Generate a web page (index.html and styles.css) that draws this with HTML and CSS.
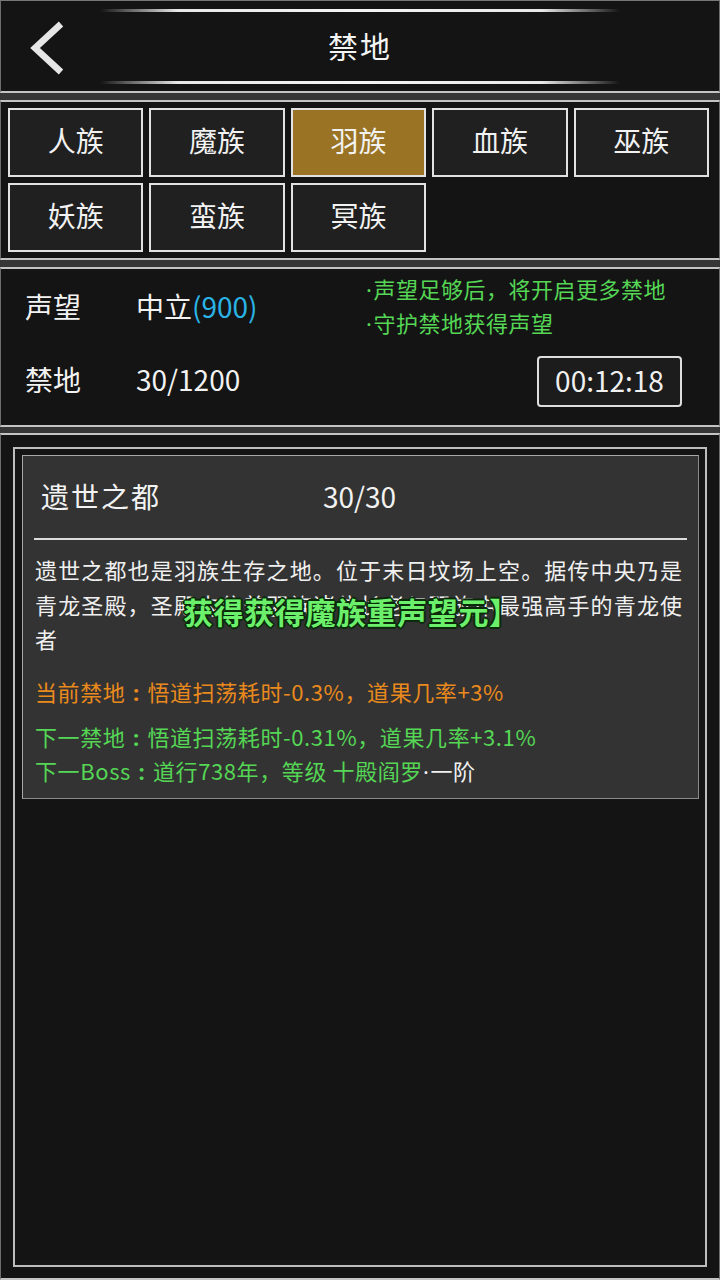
FILE: index.html
```html
<!DOCTYPE html>
<html lang="zh-CN">
<head>
<meta charset="utf-8">
<title>禁地</title>
<link rel="stylesheet" href="styles.css">
</head>
<body>
<div class="app">
  <header class="panel header">
    <div class="deco-line"></div>
    <div class="title-row">
      <svg class="back" width="40" height="56" viewBox="0 0 40 56" aria-hidden="true">
        <polyline points="32,4 6,28 32,52" fill="none" stroke="#e6e6e6" stroke-width="6.5" stroke-linecap="butt" stroke-linejoin="miter"/>
      </svg>
      <h1 class="title">禁地</h1>
      <span class="spacer"></span>
    </div>
    <div class="deco-line"></div>
  </header>

  <section class="panel tabs">
    <div class="tab">人族</div>
    <div class="tab">魔族</div>
    <div class="tab active">羽族</div>
    <div class="tab">血族</div>
    <div class="tab">巫族</div>
    <div class="tab">妖族</div>
    <div class="tab">蛮族</div>
    <div class="tab">冥族</div>
  </section>

  <section class="panel status">
    <div class="status-row row-top">
      <span class="label">声望</span>
      <span class="value">中立<span class="blue">(900)</span></span>
      <div class="tips">
        <div><span class="dot">·</span>声望足够后，将开启更多禁地</div>
        <div><span class="dot">·</span>守护禁地获得声望</div>
      </div>
    </div>
    <div class="status-row row-bottom">
      <span class="label">禁地</span>
      <span class="value">30/1200</span>
      <div class="timer">00:12:18</div>
    </div>
  </section>

  <main class="panel content">
    <div class="frame">
      <article class="card">
        <div class="card-head">
          <span class="card-name">遗世之都</span>
          <span class="card-count">30/30</span>
        </div>
        <p class="desc">遗世之都也是羽族生存之地。位于末日坟场上空。据传中央乃是青龙圣殿，圣殿内住着羽族诸位长老与羽族中最强高手的青龙使者</p>
        <p class="line orange">当前禁地<span class="colon">:</span>悟道扫荡耗时-0.3%，道果几率+3%</p>
        <p class="line green">下一禁地<span class="colon">:</span>悟道扫荡耗时-0.31%，道果几率+3.1%</p>
        <p class="line green">下一Boss<span class="colon">:</span>道行738年，等级 十殿阎罗<span class="white"><span class="dot">·</span>一阶</span></p>
        <div class="toast">获得获得魔族重声望元】</div>
      </article>
    </div>
  </main>
</div>
</body>
</html>
```

FILE: styles.css
```css
* { box-sizing: border-box; }
html, body {
  margin: 0;
  padding: 0;
  height: 1280px;
  background: #363636;
  font-family: "Noto Sans CJK SC", "Noto Sans", sans-serif;
  color: #f0f0f0;
}
.app {
  width: 720px;
  height: 1280px;
  display: flex;
  flex-direction: column;
}
.panel {
  background: #141414;
  border-left: 1px solid #6e6e6e;
  border-right: 1px solid #6e6e6e;
  border-top: 2px solid #c4c4c4;
  border-bottom: 2px solid #c4c4c4;
}
.dot {
  font-family: "Noto Sans", sans-serif;
  margin-right: 1px;
}
.colon {
  display: inline-block;
  width: 22px;
  text-align: center;
  font-family: "Noto Sans", sans-serif;
  font-weight: bold;
}

/* header */
.header {
  height: 93px;
  border-top: 1px solid #777;
  padding-top: 8px;
  display: flex;
  flex-direction: column;
}
.deco-line {
  width: 520px;
  height: 3px;
  margin: 0 auto;
  background: linear-gradient(90deg, rgba(255,255,255,0) 0%, #e8e8e8 15%, #f4f4f4 50%, #e8e8e8 85%, rgba(255,255,255,0) 100%);
}
.title-row {
  height: 69px;
  display: grid;
  grid-template-columns: 1fr auto 1fr;
  align-items: center;
}
.back {
  margin-left: 28px;
  margin-top: 2px;
}
.title {
  margin: 0 0 4px 0;
  font-size: 30px;
  font-weight: normal;
  letter-spacing: 2px;
  color: #f4f4f4;
}

/* tabs */
.tabs {
  margin-top: 7px;
  height: 160px;
  padding: 6px 10px 6px 7px;
  display: grid;
  grid-template-columns: repeat(5, 1fr);
  grid-template-rows: 69px 69px;
  column-gap: 6px;
  row-gap: 6px;
}
.tab {
  background: #202020;
  border: 2px solid #e2e2e2;
  display: flex;
  align-items: center;
  justify-content: center;
  padding-bottom: 5px;
  font-size: 28px;
  color: #f2f2f2;
}
.tab.active {
  background: #9a7424;
}

/* status */
.status {
  margin-top: 7px;
  height: 160px;
  padding-left: 24px;
}
.status-row {
  display: grid;
  grid-template-columns: 111px 230px 1fr;
  align-items: center;
}
.row-top { height: 76px; }
.row-bottom { height: 70px; }
.label, .value {
  font-size: 28px;
  color: #f2f2f2;
  margin-bottom: 3px;
}
.blue { color: #2ab4e6; }
.tips {
  font-size: 22px;
  line-height: 33px;
  letter-spacing: 0.5px;
  color: #55d655;
  margin-top: -2px;
}
.timer {
  justify-self: end;
  margin-right: 37px;
  width: 145px;
  height: 51px;
  border: 2px solid #dedede;
  border-radius: 4px;
  background: #1c1c1c;
  font-size: 28px;
  display: flex;
  align-items: center;
  justify-content: center;
  margin-top: 2px;
  padding-bottom: 3px;
}

/* content */
.content {
  margin-top: 6px;
  flex: 1;
  padding: 12px 12px 11px 12px;
  display: flex;
  flex-direction: column;
}
.frame {
  flex: 1;
  border: 2px solid #bdbdbd;
  padding: 6px 6px 0 7px;
}
.card {
  position: relative;
  background: #333333;
  border: 1px solid #a8a8a8;
  border-right-color: #8a8a8a;
  border-bottom-color: #8a8a8a;
  padding: 0 11px 10px 11px;
}
.card-head {
  height: 84px;
  padding-left: 7px;
  padding-bottom: 3px;
  display: flex;
  align-items: center;
  border-bottom: 2px solid #dcdcdc;
  font-size: 28px;
  color: #f2f2f2;
}
.card-name {
  width: 282px;
  letter-spacing: 2px;
}
.desc {
  margin: 12px 0 0 1px;
  font-size: 22px;
  line-height: 34.5px;
  letter-spacing: 1.15px;
  color: #f0f0f0;
}
.line {
  margin: 0 0 0 1px;
  font-size: 22px;
  line-height: 33px;
  letter-spacing: 0.6px;
}
.orange {
  color: #ea8a1c;
  margin-top: 19px;
  margin-bottom: 11px;
}
.green { color: #55d655; }
.white { color: #f0f0f0; }
.toast {
  position: absolute;
  left: 160px;
  top: 137px;
  font-size: 30px;
  line-height: 36px;
  font-weight: bold;
  letter-spacing: 0.6px;
  color: #6cf06c;
  text-shadow: -2px 0 #0a2a0a, 2px 0 #0a2a0a, 0 -2px #0a2a0a, 0 2px #0a2a0a,
               -1px -1px #0a2a0a, 1px 1px #0a2a0a, -1px 1px #0a2a0a, 1px -1px #0a2a0a;
  white-space: nowrap;
}
```
